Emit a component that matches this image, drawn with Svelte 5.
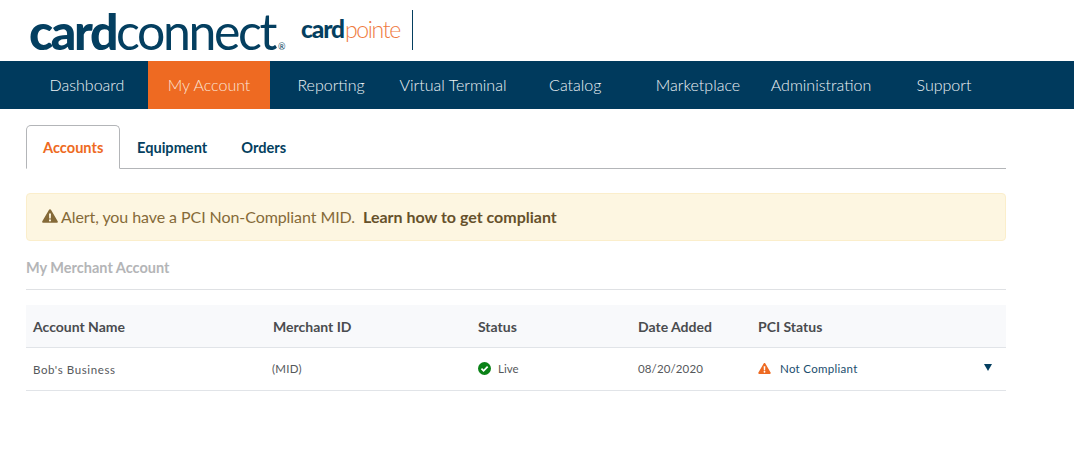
<script>
  const nav = ['Dashboard', 'My Account', 'Reporting', 'Virtual Terminal', 'Catalog', 'Marketplace', 'Administration', 'Support'];
</script>

<header class="brand">
  <div class="logo"><b>card</b><span>connect</span><i>®</i></div>
  <div class="sub"><b>card</b><span>pointe</span></div>
  <div class="rule"></div>
</header>

<nav>
  <div class="navgrid">
    {#each nav as item}
      <a href="#top" class:active={item === 'My Account'}>{item}</a>
    {/each}
  </div>
</nav>

<main>
  <div class="tabs">
    <div class="tab active">Accounts</div>
    <div class="tab">Equipment</div>
    <div class="tab">Orders</div>
  </div>

  <div class="alert">
    <svg class="warn" viewBox="0 0 16 14" width="16" height="14"><path fill="#856a38" fill-rule="evenodd" d="M8 .3c.5 0 .9.3 1.1.7l6.6 11.2c.4.8-.1 1.6-1 1.6H1.3c-.9 0-1.4-.8-1-1.6L6.9 1C7.1.6 7.5.3 8 .3zM7 4.5l.2 5h1.6l.2-5H7zm1 5.8a1.1 1.1 0 1 0 0 2.2 1.1 1.1 0 0 0 0-2.2z"/></svg>
    <span class="msg">Alert, you have a PCI Non-Compliant MID.</span>
    <strong>Learn how to get compliant</strong>
  </div>

  <h2>My Merchant Account</h2>

  <div class="table">
    <div class="row head">
      <div>Account Name</div><div>Merchant ID</div><div>Status</div><div>Date Added</div><div>PCI Status</div>
    </div>
    <div class="row body">
      <div class="name">Bob's Business</div>
      <div class="mid">(MID)</div>
      <div class="status">
        <svg viewBox="0 0 14 14" width="13" height="13"><circle cx="7" cy="7" r="7" fill="#0a8217"/><path d="M3.7 7.2l2.3 2.3 4.4-4.5" fill="none" stroke="#fff" stroke-width="1.9"/></svg>
        Live
      </div>
      <div class="date">08/20/2020</div>
      <div class="pci">
        <svg viewBox="0 0 14 12" width="13" height="11"><path fill="#ee6a22" fill-rule="evenodd" d="M7 0c.4 0 .7.2.9.5l5.9 10c.3.7-.1 1.4-.9 1.4H1.100c-.8 0-1.200-.7-.9-1.400l5.900-10C6.300.2 6.600 0 7 0zM6.100 3.600l.2 4.200h1.400l.2-4.200H6.100zM7 8.500a1 1 0 1 0 0 2 1 1 0 0 0 0-2z"/></svg>
        <span>Not Compliant</span>
      </div>
      <div class="caret"></div>
    </div>
  </div>
</main>

<style>
  :global(body) {
    margin: 0;
    background: #fff;
    font-family: Lato, "Liberation Sans", sans-serif;
  }
  .brand {
    height: 61px;
    display: flex;
    align-items: flex-start;
    padding-left: 29px;
    box-sizing: border-box;
    color: #043f60;
  }
  .logo {
    font-size: 50px;
    line-height: 40px;
    margin-top: 11px;
    letter-spacing: -2.4px;
    white-space: nowrap;
    width: 272px;
  }
  .logo b { font-weight: 900; }
  .logo span { font-weight: 400; }
  .logo i {
    font-style: normal;
    font-size: 9px;
    letter-spacing: 0;
    margin-left: 3px;
  }
  .sub {
    font-size: 24.5px;
    line-height: 26px;
    margin-top: 16px;
    letter-spacing: -1.1px;
    white-space: nowrap;
    width: 111px;
  }
  .sub b { font-weight: 900; }
  .sub span { font-weight: 300; font-size: 23px; letter-spacing: -1.35px; color: #ef7b3f; margin-left: 1px; }
  .rule {
    width: 1px;
    height: 40px;
    margin-top: 10px;
    background: #043f60;
  }
  nav {
    height: 48px;
    background: #003a5d;
    padding-left: 26px;
  }
  .navgrid {
    width: 980px;
    display: grid;
    grid-template-columns: 122px 122px 122px 122px 122.5px 123px 123px 123px;
    height: 100%;
  }
  .navgrid a {
    display: flex;
    align-items: center;
    justify-content: center;
    color: #eef2f5;
    font-weight: 300;
    font-size: 16px;
    text-decoration: none;
    white-space: nowrap;
    padding-bottom: 2px;
    box-sizing: border-box;
  }
  .navgrid a.active {
    background: #ee6a22;
    color: #fbe4d6;
  }
  main {
    width: 980px;
    margin-left: 26px;
  }
  .tabs {
    display: flex;
    margin-top: 16px;
    height: 43px;
    border-bottom: 1px solid #b3b5b8;
  }
  .tab {
    font-weight: 700;
    font-size: 14.6px;
    color: #043f60;
    padding: 1px 17px 0;
    display: flex;
    align-items: center;
    margin-bottom: -1px;
  }
  .tab.active {
    color: #ee6a22;
    border: 1px solid #b3b5b8;
    border-bottom: 1px solid #fff;
    border-radius: 5px 5px 0 0;
    padding: 1px 16px 0;
    box-sizing: border-box;
    width: 94px;
  }
  .alert {
    margin-top: 24px;
    height: 48px;
    box-sizing: border-box;
    background: #fdf6e1;
    border: 1px solid #fbeecb;
    border-radius: 4px;
    display: flex;
    align-items: center;
    padding: 0 0 2px 15px;
    font-size: 16px;
    color: #856a38;
  }
  .warn { margin-right: 3px; }
  .msg { font-weight: 400; letter-spacing: -0.075px; }
  .alert strong {
    font-weight: 700;
    font-size: 16px;
    color: #66512b;
    margin-left: 8px;
  }
  h2 {
    margin: 0;
    padding-top: 18px;
    height: 30px;
    font-size: 14.5px;
    line-height: 18px;
    font-weight: 700;
    color: #b4b5b7;
    border-bottom: 1px solid #dfe1e4;
  }
  .table { margin-top: 15px; }
  .row {
    display: grid;
    grid-template-columns: 240px 205px 160px 120px 1fr;
    padding-left: 7px;
    border-bottom: 1px solid #e1e4e8;
    position: relative;
  }
  .head {
    height: 43px;
    box-sizing: border-box;
    background: #f8f9fb;
    align-items: center;
    font-size: 14px;
    font-weight: 700;
    color: #4a4c4f;
  }
  .body {
    height: 43px;
    box-sizing: border-box;
    align-items: center;
    font-size: 11.5px;
    color: #55585b;
    padding-bottom: 2px;
  }
  .name { padding-top: 2px; letter-spacing: 0.6px; }
  .mid { margin-left: -1px; letter-spacing: 0.25px; }
  .status, .pci {
    display: flex;
    align-items: center;
  }
  .status svg { margin-right: 7px; }
  .date { letter-spacing: 0.12px; }
  .pci svg { margin-right: 9px; }
  .pci span { color: #1b4d6e; letter-spacing: 0.3px; }
  .caret {
    position: absolute;
    right: 14px;
    top: 16px;
    width: 0;
    height: 0;
    border-left: 4px solid transparent;
    border-right: 4px solid transparent;
    border-top: 7px solid #043f60;
  }
</style>
